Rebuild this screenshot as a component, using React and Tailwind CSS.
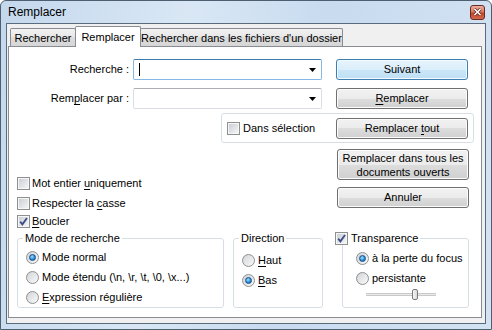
import React from 'react'

function Check({ checked }) {
  return (
    <span className="relative flex h-[13px] w-[13px] shrink-0 items-center justify-center border border-[#8e8f8f] bg-[#f6f6f6]">
      <span className="h-[9px] w-[9px] bg-[linear-gradient(135deg,#cbcfd5,#f3f4f5)]" />
      {checked && (
        <svg className="absolute left-0 top-0" width="11" height="11" viewBox="0 0 11 11">
          <path d="M2.2 5.6 L4.4 8.4 L9 2" fill="none" stroke="#3b4f86" strokeWidth="1.8" />
        </svg>
      )}
    </span>
  )
}

function Radio({ on }) {
  return (
    <span className="flex h-[13px] w-[13px] shrink-0 items-center justify-center rounded-full border border-[#8e8f8f] bg-[linear-gradient(135deg,#cfd2d6,#fafafa)]">
      {on ? (
        <span className="h-[7px] w-[7px] rounded-full border border-[#174f8e] bg-[radial-gradient(circle_at_40%_35%,#a6e0ff,#2b90d8_55%,#0d4b93)]" />
      ) : (
        <span className="h-[9px] w-[9px] rounded-full bg-[linear-gradient(135deg,#d6d8db,#f6f6f6)]" />
      )}
    </span>
  )
}

function Btn({ children, def, className = '' }) {
  const look = def
    ? 'border-[#3c7fb1] bg-[linear-gradient(#e8f4fc_0%,#dbeefb_50%,#cae6f8_50%,#c1e0f5_100%)] shadow-[inset_0_0_0_1px_#f4faff]'
    : 'border-[#707070] bg-[linear-gradient(#f2f2f2_0%,#ebebeb_50%,#dddddd_50%,#d0d0d0_100%)] shadow-[inset_0_0_0_1px_#fcfcfc]'
  return (
    <div className={`flex shrink-0 items-center justify-center rounded-[3px] border text-center ${look} ${className}`}>
      {children}
    </div>
  )
}

function Combo({ focus }) {
  return (
    <div
      className={`ml-[4px] flex h-[21px] w-[189px] items-center rounded-[2px] border bg-white pl-[5px] pr-[5px] ${
        focus ? 'border-[#86b8e6] border-t-[#3d7bad]' : 'border-[#dadde3] border-t-[#abadb3]'
      }`}
    >
      {focus && <span className="h-[13px] w-px bg-black" />}
      <svg className="ml-auto" width="7" height="4" viewBox="0 0 7 4">
        <path d="M0 0H7L3.5 4Z" fill="#000" />
      </svg>
    </div>
  )
}

function CheckRow({ checked, children, className = '' }) {
  return (
    <div className={`flex h-[13px] items-center gap-[2px] ${className}`}>
      <Check checked={checked} />
      <span>{children}</span>
    </div>
  )
}

function RadioRow({ on, children }) {
  return (
    <div className="flex h-[20px] items-center gap-[3px]">
      <Radio on={on} />
      <span>{children}</span>
    </div>
  )
}

export default function App() {
  return (
    <div className="flex h-[330px] w-[492px] flex-col overflow-hidden rounded-t-[6px] border border-[#4f5f72] bg-[linear-gradient(100deg,#c4d8ed_0%,#d9e7f5_35%,#c8dbef_60%,#d4e3f3_100%)] font-['Liberation_Sans',Arial,sans-serif] text-[11px] leading-[13px] text-black">
      <div className="flex h-[22px] items-center pl-[7px] pr-[6px]">
        <span className="text-[12px] leading-[14px]">Remplacer</span>
        <div className="ml-auto flex h-[15px] w-[15px] items-center justify-center rounded-[3px] border border-[#6b2b22] bg-[linear-gradient(#eab0a2_0%,#d97a62_45%,#c0442a_55%,#d2694c_100%)]">
          <svg width="9" height="8" viewBox="0 0 9 8">
            <path d="M1.5 1 L7.5 7 M7.5 1 L1.5 7" stroke="#5a2018" strokeWidth="3" />
            <path d="M1.5 1 L7.5 7 M7.5 1 L1.5 7" stroke="#fff" strokeWidth="1.6" />
          </svg>
        </div>
      </div>

      <div className="mx-[5px] flex h-[301px] flex-col border border-[#5b6b7e] bg-[#f0f0f0]">
        <div className="flex items-end pl-[3px] pt-[2px]">
          <div className="flex h-[18px] w-[66px] items-center justify-center rounded-t-[2px] border border-b-0 border-[#898c95] bg-[linear-gradient(#f2f2f2,#e6e6e6_50%,#dcdcdc_50%,#d6d6d6)] pt-[2px]">
            Rechercher
          </div>
          <div className="relative z-10 -mb-px -ml-px flex h-[21px] w-[66px] items-center justify-center rounded-t-[2px] border border-b-0 border-[#898c95] bg-white">
            Remplacer
          </div>
          <div className="-ml-px flex h-[18px] w-[203px] items-center justify-center rounded-t-[2px] border border-b-0 border-[#898c95] bg-[linear-gradient(#f2f2f2,#e6e6e6_50%,#dcdcdc_50%,#d6d6d6)] pt-[2px]">
            Rechercher dans les fichiers d'un dossier
          </div>
        </div>

        <div className="ml-[1px] flex h-[272px] w-[474px] flex-col border border-[#898c95] bg-white">
          <div className="mt-[12px] flex items-center">
            <span className="w-[120px] text-right">Recherche :</span>
            <Combo focus />
            <Btn def className="ml-[14px] h-[21px] w-[132px]">Suivant</Btn>
          </div>
          <div className="mt-[8px] flex items-center">
            <span className="w-[120px] text-right">
              Rem<u className="underline-offset-[2px]">p</u>lacer par :
            </span>
            <Combo />
            <Btn className="ml-[14px] h-[21px] w-[132px]">
              <span><u className="underline-offset-[2px]">R</u>emplacer</span>
            </Btn>
          </div>

          <div className="ml-[212px] mt-[4px] flex h-[30px] w-[253px] items-center rounded-[3px] border border-[#d5dfe5] pl-[5px] pr-[5px]">
            <Check />
            <span className="ml-[3px]">Dans sélection</span>
            <Btn className="ml-auto h-[21px] w-[132px]">
              <span>Remplacer <u className="underline-offset-[2px]">t</u>out</span>
            </Btn>
          </div>

          <div className="flex">
            <div className="ml-[8px] flex flex-col pt-[34px]">
              <CheckRow>
                Mot entier <u className="underline-offset-[2px]">u</u>niquement
              </CheckRow>
              <CheckRow className="mt-[7px]">
                Respecter la <u className="underline-offset-[2px]">c</u>asse
              </CheckRow>
              <CheckRow checked className="mt-[5px]">
                <u className="underline-offset-[2px]">B</u>oucler
              </CheckRow>
            </div>
            <div className="ml-auto mr-[12px] flex flex-col pt-[6px]">
              <Btn className="h-[31px] w-[132px] leading-[14px]">
                Remplacer dans tous les
                <br />
                documents ouverts
              </Btn>
              <Btn className="mt-[7px] h-[21px] w-[132px]">Annuler</Btn>
            </div>
          </div>

          <div className="ml-[8px] mt-[4px] flex">
            <fieldset className="h-[76px] w-[207px] rounded-[3px] border border-[#d5dfe5]">
              <legend className="ml-[5px] px-[2px]">Mode de recherche</legend>
              <div className="flex flex-col pl-[8px] pt-[2px]">
                <RadioRow on>Mode normal</RadioRow>
                <RadioRow>Mode étendu (\n, \r, \t, \0, \x...)</RadioRow>
                <RadioRow>
                  <u className="underline-offset-[2px]">E</u>xpression régulière
                </RadioRow>
              </div>
            </fieldset>

            <fieldset className="ml-[9px] h-[76px] w-[90px] rounded-[3px] border border-[#d5dfe5]">
              <legend className="ml-[5px] px-[2px]">Direction</legend>
              <div className="flex flex-col pl-[8px] pt-[5px]">
                <RadioRow>
                  <u className="underline-offset-[2px]">H</u>aut
                </RadioRow>
                <RadioRow on>
                  <u className="underline-offset-[2px]">B</u>as
                </RadioRow>
              </div>
            </fieldset>

            <fieldset className="ml-[19px] h-[76px] w-[127px] rounded-[3px] border border-[#d5dfe5]">
              <legend className="-ml-[8px] flex items-center gap-[3px] bg-white pr-[2px]">
                <Check checked />
                <span>Transparence</span>
              </legend>
              <div className="flex flex-col pl-[13px] pt-[3px]">
                <RadioRow on>à la perte du focus</RadioRow>
                <RadioRow>persistante</RadioRow>
                <div className="ml-[10px] flex h-[12px] w-[70px] items-center">
                  <span className="h-[3px] w-[46px] border-y border-[#c9c9c9] bg-[#e9ebeb]" />
                  <span className="h-[11px] w-[6px] rounded-[2px] border border-[#7b7b7b] bg-[linear-gradient(90deg,#f6f6f6,#dadada)]" />
                  <span className="h-[3px] flex-1 border-y border-[#c9c9c9] bg-[#e9ebeb]" />
                </div>
              </div>
            </fieldset>
          </div>
        </div>
      </div>
    </div>
  )
}
